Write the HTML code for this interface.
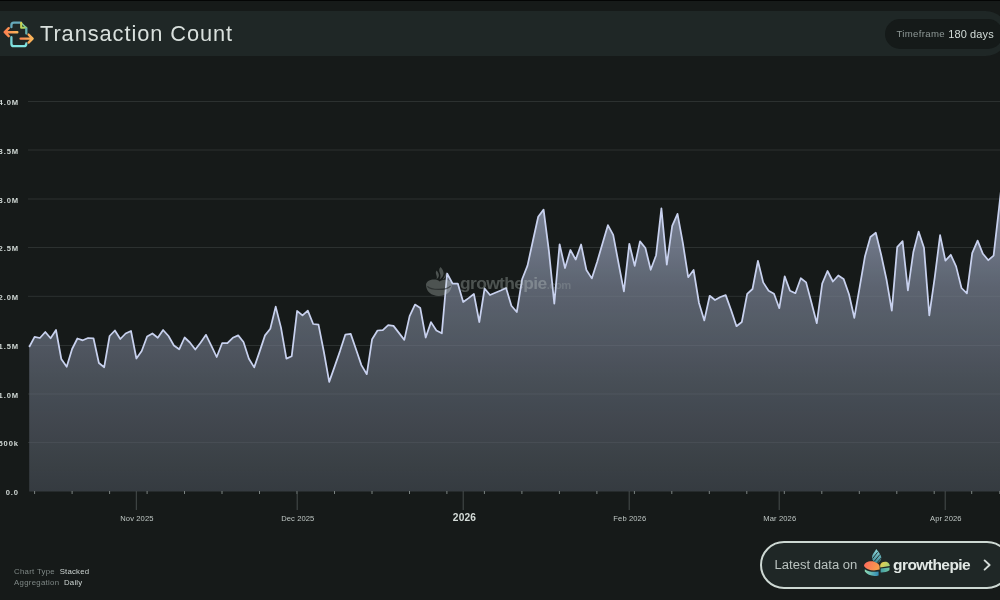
<!DOCTYPE html>
<html lang="en">
<head>
<meta charset="utf-8">
<title>Transaction Count</title>
<style>
html,body{margin:0;padding:0;}
body{width:1000px;height:600px;overflow:hidden;position:relative;background:#161a19;font-family:"Liberation Sans",sans-serif;color:#cdd8d3;}
.topline{position:absolute;left:0;top:0;width:1000px;height:1px;background:#040505;}
.header{position:absolute;left:-40px;top:10.5px;width:1048px;height:45.8px;border-radius:23px;background:#1f2726;}
.title{will-change:transform;position:absolute;left:40.2px;top:20px;font-size:21.8px;line-height:28px;color:#d9e0dd;white-space:nowrap;letter-spacing:0.93px;}
.tf{will-change:transform;position:absolute;left:885px;top:18.5px;width:117.6px;height:30.3px;border-radius:15.2px;background:#151a19;}
.tf span{position:absolute;top:8px;line-height:14px;white-space:nowrap;}
.tf .k{left:11.5px;top:8.2px;font-size:9.6px;color:#8f9997;letter-spacing:0.32px;}
.tf .v{left:63.3px;font-size:11px;color:#d3dcd8;letter-spacing:0.1px;}
svg.chart{position:absolute;left:0;top:0;width:1000px;height:600px;will-change:transform;}
.grid line{stroke:#2c3130;stroke-width:1;}
.ylab text{font-size:7.6px;fill:#d0d8d5;text-anchor:end;letter-spacing:0.9px;font-weight:bold;}
.xlab text{font-size:7.6px;fill:#bfc7c4;text-anchor:middle;letter-spacing:0.1px;}
.xlab text.yr{font-size:10.2px;font-weight:bold;fill:#d5dcd9;}
.minor line{stroke:#7c8482;stroke-width:1;}
.major line{stroke:#484e4d;stroke-width:1;}
.meta{will-change:transform;position:absolute;left:14.3px;top:565.9px;font-size:7.8px;line-height:11px;color:#7f8886;white-space:nowrap;letter-spacing:0.3px;}
.meta b{font-weight:normal;color:#cdd5d2;margin-left:2.2px;letter-spacing:0.2px;}
.cta{will-change:transform;position:absolute;left:759.5px;top:541px;width:247px;height:43.6px;border:2px solid #cdd8d3;border-radius:24px;background:#1f2726;}
.cta .l{position:absolute;left:12.6px;top:13px;font-size:13.05px;line-height:18px;color:#b9c2bf;white-space:nowrap;letter-spacing:0;}
.cta .g{position:absolute;left:131px;top:11.5px;font-size:15.5px;line-height:20px;font-weight:bold;color:#e2e8e5;white-space:nowrap;letter-spacing:-0.55px;}
.cta svg.chev{position:absolute;left:219px;top:15px;width:12px;height:14px;}
.wmt{position:absolute;left:460px;top:271.9px;font-size:17.4px;line-height:22px;font-weight:bold;color:#cdd8d3;letter-spacing:-0.62px;white-space:nowrap;opacity:0.3;}
.wmt i{font-style:normal;font-size:11.2px;letter-spacing:-0.55px;opacity:.6;margin-left:0.2px;}
svg.ov{position:absolute;left:0;top:0;width:1000px;height:600px;pointer-events:none;}
</style>
</head>
<body>
<div class="topline"></div>
<div class="header"></div>
<div class="title">Transaction Count</div>
<div class="tf"><span class="k">Timeframe</span><span class="v">180 days</span></div>

<svg class="chart" viewBox="0 0 1000 600">
  <defs>
    <linearGradient id="ag" gradientUnits="userSpaceOnUse" x1="0" y1="190" x2="0" y2="491">
      <stop offset="0" stop-color="#c3cff0" stop-opacity="0.62"/>
      <stop offset="0.316" stop-color="#c3cff0" stop-opacity="0.41"/>
      <stop offset="0.631" stop-color="#c3cff0" stop-opacity="0.29"/>
      <stop offset="1" stop-color="#c3cff0" stop-opacity="0.185"/>
    </linearGradient>
  </defs>
  <g class="grid"><line x1="28" x2="1000" y1="101.5" y2="101.5"/><line x1="28" x2="1000" y1="150.0" y2="150.0"/><line x1="28" x2="1000" y1="199.0" y2="199.0"/><line x1="28" x2="1000" y1="247.5" y2="247.5"/><line x1="28" x2="1000" y1="296.3" y2="296.3"/><line x1="28" x2="1000" y1="345.5" y2="345.5"/><line x1="28" x2="1000" y1="394.0" y2="394.0"/><line x1="28" x2="1000" y1="442.5" y2="442.5"/></g>
  <path d="M29.2 347.0 L34.6 336.8 L39.9 338.0 L45.3 332.0 L50.6 338.3 L56.0 330.0 L61.3 359.0 L66.7 366.8 L72.1 349.0 L77.4 338.5 L82.8 340.3 L88.1 338.0 L93.5 338.3 L98.9 363.0 L104.2 367.2 L109.6 336.0 L114.9 330.5 L120.3 339.0 L125.6 333.5 L131.0 331.0 L136.4 358.5 L141.7 351.0 L147.1 336.5 L152.4 333.5 L157.8 337.8 L163.1 330.0 L168.5 336.0 L173.9 345.5 L179.2 349.3 L184.6 337.5 L189.9 342.5 L195.3 349.5 L200.7 342.5 L206.0 334.8 L211.4 345.8 L216.7 357.0 L222.1 343.2 L227.4 343.2 L232.8 337.8 L238.2 335.4 L243.5 342.0 L248.9 358.8 L254.2 367.4 L259.6 351.6 L265.0 335.4 L270.3 328.8 L275.7 306.6 L281.0 327.6 L286.4 358.6 L291.7 356.2 L297.1 311.0 L302.5 315.4 L307.8 310.6 L313.2 324.0 L318.5 324.6 L323.9 352.0 L329.2 381.9 L334.6 366.6 L340.0 351.1 L345.3 334.7 L350.7 333.9 L356.0 349.3 L361.4 365.1 L366.8 374.2 L372.1 339.2 L377.5 330.5 L382.8 330.1 L388.2 325.2 L393.5 325.9 L398.9 332.9 L404.3 339.9 L409.6 316.1 L415.0 304.6 L420.3 308.1 L425.7 337.5 L431.0 322.1 L436.4 330.5 L441.8 333.3 L447.1 273.5 L452.5 283.5 L457.8 283.5 L463.2 302.0 L468.6 298.1 L473.9 294.0 L479.3 322.0 L484.6 288.5 L490.0 295.0 L495.3 292.7 L500.7 290.5 L506.1 288.0 L511.4 305.8 L516.8 312.0 L522.1 279.3 L527.5 265.6 L532.9 240.8 L538.2 216.8 L543.6 209.6 L548.9 250.9 L554.3 303.6 L559.6 244.3 L565.0 268.0 L570.4 250.0 L575.7 259.6 L581.1 244.5 L586.4 270.0 L591.8 278.4 L597.1 262.0 L602.5 243.5 L607.9 225.2 L613.2 234.8 L618.6 263.5 L623.9 291.3 L629.3 243.8 L634.7 265.9 L640.0 241.4 L645.4 248.0 L650.7 269.8 L656.1 255.2 L661.4 208.4 L666.8 264.7 L672.2 225.8 L677.5 213.8 L682.9 243.2 L688.2 277.2 L693.6 270.0 L699.0 303.0 L704.3 320.4 L709.7 295.8 L715.0 300.0 L720.4 297.0 L725.7 295.1 L731.1 310.1 L736.5 326.2 L741.8 322.0 L747.2 293.8 L752.5 289.0 L757.9 260.8 L763.2 282.4 L768.6 290.8 L774.0 293.8 L779.3 308.2 L784.7 276.4 L790.0 290.8 L795.4 293.2 L800.8 278.2 L806.1 282.4 L811.5 302.8 L816.8 323.2 L822.2 283.6 L827.5 271.0 L832.9 281.5 L838.3 275.5 L843.6 278.9 L849.0 294.3 L854.3 317.8 L859.7 287.0 L865.0 256.2 L870.4 237.0 L875.8 232.8 L881.1 254.5 L886.5 279.5 L891.8 310.6 L897.2 247.2 L902.6 241.2 L907.9 290.3 L913.3 252.3 L918.6 231.6 L924.0 247.8 L929.3 315.4 L934.7 277.6 L940.1 235.2 L945.4 260.6 L950.8 254.8 L956.1 266.4 L961.5 288.0 L966.9 293.4 L972.2 253.2 L977.6 240.6 L982.9 253.8 L988.3 260.2 L993.6 255.6 L999.0 208.4 L1004.4 160.0 L1004.4 491.5 L29.2 491.5 Z" fill="#161a19" fill-opacity="0.45"/>
  <path d="M29.2 347.0 L34.6 336.8 L39.9 338.0 L45.3 332.0 L50.6 338.3 L56.0 330.0 L61.3 359.0 L66.7 366.8 L72.1 349.0 L77.4 338.5 L82.8 340.3 L88.1 338.0 L93.5 338.3 L98.9 363.0 L104.2 367.2 L109.6 336.0 L114.9 330.5 L120.3 339.0 L125.6 333.5 L131.0 331.0 L136.4 358.5 L141.7 351.0 L147.1 336.5 L152.4 333.5 L157.8 337.8 L163.1 330.0 L168.5 336.0 L173.9 345.5 L179.2 349.3 L184.6 337.5 L189.9 342.5 L195.3 349.5 L200.7 342.5 L206.0 334.8 L211.4 345.8 L216.7 357.0 L222.1 343.2 L227.4 343.2 L232.8 337.8 L238.2 335.4 L243.5 342.0 L248.9 358.8 L254.2 367.4 L259.6 351.6 L265.0 335.4 L270.3 328.8 L275.7 306.6 L281.0 327.6 L286.4 358.6 L291.7 356.2 L297.1 311.0 L302.5 315.4 L307.8 310.6 L313.2 324.0 L318.5 324.6 L323.9 352.0 L329.2 381.9 L334.6 366.6 L340.0 351.1 L345.3 334.7 L350.7 333.9 L356.0 349.3 L361.4 365.1 L366.8 374.2 L372.1 339.2 L377.5 330.5 L382.8 330.1 L388.2 325.2 L393.5 325.9 L398.9 332.9 L404.3 339.9 L409.6 316.1 L415.0 304.6 L420.3 308.1 L425.7 337.5 L431.0 322.1 L436.4 330.5 L441.8 333.3 L447.1 273.5 L452.5 283.5 L457.8 283.5 L463.2 302.0 L468.6 298.1 L473.9 294.0 L479.3 322.0 L484.6 288.5 L490.0 295.0 L495.3 292.7 L500.7 290.5 L506.1 288.0 L511.4 305.8 L516.8 312.0 L522.1 279.3 L527.5 265.6 L532.9 240.8 L538.2 216.8 L543.6 209.6 L548.9 250.9 L554.3 303.6 L559.6 244.3 L565.0 268.0 L570.4 250.0 L575.7 259.6 L581.1 244.5 L586.4 270.0 L591.8 278.4 L597.1 262.0 L602.5 243.5 L607.9 225.2 L613.2 234.8 L618.6 263.5 L623.9 291.3 L629.3 243.8 L634.7 265.9 L640.0 241.4 L645.4 248.0 L650.7 269.8 L656.1 255.2 L661.4 208.4 L666.8 264.7 L672.2 225.8 L677.5 213.8 L682.9 243.2 L688.2 277.2 L693.6 270.0 L699.0 303.0 L704.3 320.4 L709.7 295.8 L715.0 300.0 L720.4 297.0 L725.7 295.1 L731.1 310.1 L736.5 326.2 L741.8 322.0 L747.2 293.8 L752.5 289.0 L757.9 260.8 L763.2 282.4 L768.6 290.8 L774.0 293.8 L779.3 308.2 L784.7 276.4 L790.0 290.8 L795.4 293.2 L800.8 278.2 L806.1 282.4 L811.5 302.8 L816.8 323.2 L822.2 283.6 L827.5 271.0 L832.9 281.5 L838.3 275.5 L843.6 278.9 L849.0 294.3 L854.3 317.8 L859.7 287.0 L865.0 256.2 L870.4 237.0 L875.8 232.8 L881.1 254.5 L886.5 279.5 L891.8 310.6 L897.2 247.2 L902.6 241.2 L907.9 290.3 L913.3 252.3 L918.6 231.6 L924.0 247.8 L929.3 315.4 L934.7 277.6 L940.1 235.2 L945.4 260.6 L950.8 254.8 L956.1 266.4 L961.5 288.0 L966.9 293.4 L972.2 253.2 L977.6 240.6 L982.9 253.8 L988.3 260.2 L993.6 255.6 L999.0 208.4 L1004.4 160.0 L1004.4 491.5 L29.2 491.5 Z" fill="url(#ag)"/>
  <path d="M29.2 347.0 L34.6 336.8 L39.9 338.0 L45.3 332.0 L50.6 338.3 L56.0 330.0 L61.3 359.0 L66.7 366.8 L72.1 349.0 L77.4 338.5 L82.8 340.3 L88.1 338.0 L93.5 338.3 L98.9 363.0 L104.2 367.2 L109.6 336.0 L114.9 330.5 L120.3 339.0 L125.6 333.5 L131.0 331.0 L136.4 358.5 L141.7 351.0 L147.1 336.5 L152.4 333.5 L157.8 337.8 L163.1 330.0 L168.5 336.0 L173.9 345.5 L179.2 349.3 L184.6 337.5 L189.9 342.5 L195.3 349.5 L200.7 342.5 L206.0 334.8 L211.4 345.8 L216.7 357.0 L222.1 343.2 L227.4 343.2 L232.8 337.8 L238.2 335.4 L243.5 342.0 L248.9 358.8 L254.2 367.4 L259.6 351.6 L265.0 335.4 L270.3 328.8 L275.7 306.6 L281.0 327.6 L286.4 358.6 L291.7 356.2 L297.1 311.0 L302.5 315.4 L307.8 310.6 L313.2 324.0 L318.5 324.6 L323.9 352.0 L329.2 381.9 L334.6 366.6 L340.0 351.1 L345.3 334.7 L350.7 333.9 L356.0 349.3 L361.4 365.1 L366.8 374.2 L372.1 339.2 L377.5 330.5 L382.8 330.1 L388.2 325.2 L393.5 325.9 L398.9 332.9 L404.3 339.9 L409.6 316.1 L415.0 304.6 L420.3 308.1 L425.7 337.5 L431.0 322.1 L436.4 330.5 L441.8 333.3 L447.1 273.5 L452.5 283.5 L457.8 283.5 L463.2 302.0 L468.6 298.1 L473.9 294.0 L479.3 322.0 L484.6 288.5 L490.0 295.0 L495.3 292.7 L500.7 290.5 L506.1 288.0 L511.4 305.8 L516.8 312.0 L522.1 279.3 L527.5 265.6 L532.9 240.8 L538.2 216.8 L543.6 209.6 L548.9 250.9 L554.3 303.6 L559.6 244.3 L565.0 268.0 L570.4 250.0 L575.7 259.6 L581.1 244.5 L586.4 270.0 L591.8 278.4 L597.1 262.0 L602.5 243.5 L607.9 225.2 L613.2 234.8 L618.6 263.5 L623.9 291.3 L629.3 243.8 L634.7 265.9 L640.0 241.4 L645.4 248.0 L650.7 269.8 L656.1 255.2 L661.4 208.4 L666.8 264.7 L672.2 225.8 L677.5 213.8 L682.9 243.2 L688.2 277.2 L693.6 270.0 L699.0 303.0 L704.3 320.4 L709.7 295.8 L715.0 300.0 L720.4 297.0 L725.7 295.1 L731.1 310.1 L736.5 326.2 L741.8 322.0 L747.2 293.8 L752.5 289.0 L757.9 260.8 L763.2 282.4 L768.6 290.8 L774.0 293.8 L779.3 308.2 L784.7 276.4 L790.0 290.8 L795.4 293.2 L800.8 278.2 L806.1 282.4 L811.5 302.8 L816.8 323.2 L822.2 283.6 L827.5 271.0 L832.9 281.5 L838.3 275.5 L843.6 278.9 L849.0 294.3 L854.3 317.8 L859.7 287.0 L865.0 256.2 L870.4 237.0 L875.8 232.8 L881.1 254.5 L886.5 279.5 L891.8 310.6 L897.2 247.2 L902.6 241.2 L907.9 290.3 L913.3 252.3 L918.6 231.6 L924.0 247.8 L929.3 315.4 L934.7 277.6 L940.1 235.2 L945.4 260.6 L950.8 254.8 L956.1 266.4 L961.5 288.0 L966.9 293.4 L972.2 253.2 L977.6 240.6 L982.9 253.8 L988.3 260.2 L993.6 255.6 L999.0 208.4 L1004.4 160.0" fill="none" stroke="#c8d1ee" stroke-width="1.75" stroke-linejoin="round" stroke-linecap="butt"/>
  <g class="minor"><line x1="999.8" x2="999.8" y1="491" y2="494"/><line x1="34.6" x2="34.6" y1="491" y2="494"/><line x1="72.1" x2="72.1" y1="491" y2="494"/><line x1="109.6" x2="109.6" y1="491" y2="494"/><line x1="147.1" x2="147.1" y1="491" y2="494"/><line x1="184.5" x2="184.5" y1="491" y2="494"/><line x1="222.0" x2="222.0" y1="491" y2="494"/><line x1="259.5" x2="259.5" y1="491" y2="494"/><line x1="297.0" x2="297.0" y1="491" y2="494"/><line x1="334.5" x2="334.5" y1="491" y2="494"/><line x1="372.0" x2="372.0" y1="491" y2="494"/><line x1="409.5" x2="409.5" y1="491" y2="494"/><line x1="446.9" x2="446.9" y1="491" y2="494"/><line x1="484.4" x2="484.4" y1="491" y2="494"/><line x1="521.9" x2="521.9" y1="491" y2="494"/><line x1="559.4" x2="559.4" y1="491" y2="494"/><line x1="596.9" x2="596.9" y1="491" y2="494"/><line x1="634.4" x2="634.4" y1="491" y2="494"/><line x1="671.8" x2="671.8" y1="491" y2="494"/><line x1="709.3" x2="709.3" y1="491" y2="494"/><line x1="746.8" x2="746.8" y1="491" y2="494"/><line x1="784.3" x2="784.3" y1="491" y2="494"/><line x1="821.8" x2="821.8" y1="491" y2="494"/><line x1="859.3" x2="859.3" y1="491" y2="494"/><line x1="896.8" x2="896.8" y1="491" y2="494"/><line x1="934.2" x2="934.2" y1="491" y2="494"/><line x1="971.7" x2="971.7" y1="491" y2="494"/></g>
  <g class="major"><line x1="136.3" x2="136.3" y1="491" y2="510"/><line x1="297.2" x2="297.2" y1="491" y2="510"/><line x1="463.2" x2="463.2" y1="491" y2="510"/><line x1="629.2" x2="629.2" y1="491" y2="510"/><line x1="779.2" x2="779.2" y1="491" y2="510"/><line x1="945.2" x2="945.2" y1="491" y2="510"/></g>
  <g class="ylab"><text x="19.0" y="105.1">4.0M</text><text x="19.0" y="153.6">3.5M</text><text x="19.0" y="202.6">3.0M</text><text x="19.0" y="251.1">2.5M</text><text x="19.0" y="299.9">2.0M</text><text x="19.0" y="349.1">1.5M</text><text x="19.0" y="397.6">1.0M</text><text x="19.0" y="446.1">500k</text><text x="19.0" y="494.6">0.0</text></g>
  <g class="xlab"><text x="136.9" y="521">Nov 2025</text><text x="297.8" y="521">Dec 2025</text><text x="464.40000000000003" y="521" class="yr">2026</text><text x="629.8000000000001" y="521">Feb 2026</text><text x="779.8000000000001" y="521">Mar 2026</text><text x="945.8000000000001" y="521">Apr 2026</text></g>
</svg>

<div class="wmt">growthepie<i>.com</i></div>

<div class="meta">Chart Type <b>Stacked</b><br>Aggregation <b>Daily</b></div>

<div class="cta">
  <span class="l">Latest data on</span>
  <span class="g">growthepie</span>
  <svg class="chev" viewBox="0 0 12 14" fill="none" stroke="#d5dcd9" stroke-width="1.9" stroke-linecap="round" stroke-linejoin="round"><path d="M3.6 2.4 L8.6 7 L3.6 11.6"/></svg>
</div>
<svg class="ov" viewBox="0 0 1000 600" fill="none">
  <defs>
    <linearGradient id="gd" gradientUnits="userSpaceOnUse" x1="0" y1="22" x2="0" y2="47"><stop offset="0" stop-color="#5a9db3"/><stop offset="1" stop-color="#82e6e2"/></linearGradient>
    <linearGradient id="go1" gradientUnits="userSpaceOnUse" x1="3" y1="0" x2="18" y2="0"><stop offset="0" stop-color="#fe7a4e"/><stop offset="1" stop-color="#f9b65a"/></linearGradient>
    <linearGradient id="go2" gradientUnits="userSpaceOnUse" x1="20" y1="0" x2="34" y2="0"><stop offset="0" stop-color="#fe8550"/><stop offset="1" stop-color="#f9bd5c"/></linearGradient>
    <linearGradient id="gy" gradientUnits="userSpaceOnUse" x1="20" y1="22" x2="27" y2="29"><stop offset="0" stop-color="#e0d548"/><stop offset="1" stop-color="#8fd06c"/></linearGradient>
    <linearGradient id="lf" gradientUnits="userSpaceOnUse" x1="0" y1="563" x2="0" y2="549"><stop offset="0" stop-color="#3b8593"/><stop offset="1" stop-color="#8ed8d9"/></linearGradient>
    <linearGradient id="l1" gradientUnits="userSpaceOnUse" x1="865" y1="562" x2="880" y2="570"><stop offset="0" stop-color="#fb6a5c"/><stop offset="1" stop-color="#f8a648"/></linearGradient>
    <linearGradient id="l2" gradientUnits="userSpaceOnUse" x1="880" y1="561" x2="890" y2="568"><stop offset="0" stop-color="#f7cc46"/><stop offset="1" stop-color="#94d27e"/></linearGradient>
    <linearGradient id="l3" gradientUnits="userSpaceOnUse" x1="865" y1="0" x2="879" y2="0"><stop offset="0" stop-color="#8fdcb4"/><stop offset="1" stop-color="#2c86b4"/></linearGradient>
    <linearGradient id="l4" gradientUnits="userSpaceOnUse" x1="880" y1="0" x2="890" y2="0"><stop offset="0" stop-color="#3f9aa6"/><stop offset="1" stop-color="#74c7a0"/></linearGradient>
  </defs>
  <!-- title icon -->
  <g stroke-linecap="round" stroke-linejoin="round" stroke-width="2.3">
    <path d="M11.4 27.2 V25.2 Q11.4 22.7 13.9 22.7 H20.8" stroke="#66a9bb"/>
    <path d="M21.6 23.2 L26 27.6" stroke="#7cc9a2" stroke-width="1.5"/>
    <path d="M21.2 22.8 V27.8 H26.3" stroke="url(#gy)" stroke-width="2.1"/>
    <path d="M26.3 28.6 V33.6" stroke="#63b0b0"/>
    <path d="M11.4 37.2 V43.7 Q11.4 46.2 13.9 46.2 H23.8 Q26.3 46.2 26.3 43.7 V43.4" stroke="url(#gd)"/>
    <path d="M17.3 32.2 H5 M8.7 28.2 L4.7 32.2 L8.7 36.2" stroke="url(#go1)" stroke-width="2.4"/>
    <path d="M20.6 38.6 H32.3 M28.6 34.6 L32.6 38.6 L28.6 42.6" stroke="url(#go2)" stroke-width="2.4"/>
  </g>
  <!-- watermark logo -->
  <g fill="#cdd8d3" opacity="0.3">
    <path d="M440.6 267 C436.4 271.6 443.2 273.6 439.4 279.4 C445.6 275.6 444 271 440.6 267Z M436.6 270.6 C434.2 274 438.2 275.8 436.4 279.6 C440.4 276.6 439 273.4 436.6 270.6Z M444.4 272.2 C446 274.6 444.2 277 442.4 279.6 C446.8 277.6 446.6 274.6 444.4 272.2Z"/>
    <path d="M426 284.6 C426.4 279.6 436 277.8 439.6 281.4 C443.6 278.4 451.2 279.6 451.8 284.2 C452 291.6 446.4 296 438.8 296 C431.2 296 426 291.6 426 284.6Z"/>
  </g>
  <path d="M427.4 286.4 C431 290.4 446.6 290.6 450.6 286" stroke="#161a19" stroke-opacity="0.55" stroke-width="1.2"/>
  <!-- cta logo -->
  <g>
    <path d="M876.3 548.9 C878.6 552.2 881.4 554.8 881.3 557.8 C881.2 560.6 879.2 562.6 876.8 563.4 C874 562.2 872 560.2 872 557.2 C872 554.2 874.6 552 876.3 548.9Z" fill="url(#lf)"/>
    <path d="M872.6 558.6 L877.6 552.2 M874.2 561.4 L880 554.4 M877 562.8 L881.2 558" stroke="#1f2726" stroke-width="0.9"/>
    <path d="M864 566 C864 562.6 869.6 560.4 874.2 561.8 C877.4 562.8 879.6 564.8 879.6 566.4 L879.6 569.6 C873.4 571.4 866.6 570.2 864 566Z" fill="url(#l1)"/>
    <path d="M880.2 565 C880.6 562.2 884.6 561 887 562 C888.8 562.8 889.8 564.6 889.8 566 L880.2 567.4Z" fill="url(#l2)"/>
    <path d="M864.8 569.2 C868.4 571.6 873.4 572.4 878.6 571.4 L878.6 575.4 C873.4 576.8 867.4 575.4 864.8 571.6Z" fill="url(#l3)"/>
    <path d="M880.6 568.6 L889.6 567.6 L889.4 570.2 C887.4 571.8 883.6 572.6 880.6 572.4Z" fill="url(#l4)"/>
  </g>
</svg>
</body>
</html>
